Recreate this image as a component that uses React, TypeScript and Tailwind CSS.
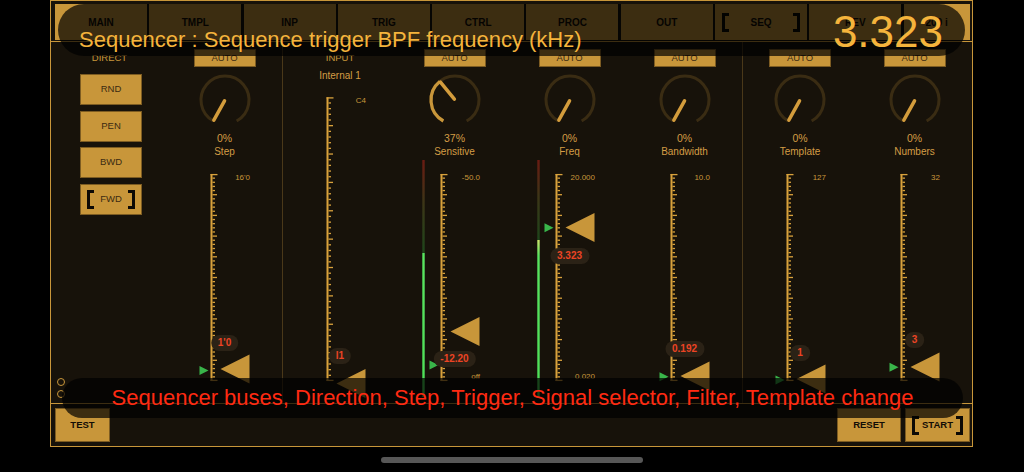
import React from "react";

type Meter = { from: number; warm?: boolean };

type SliderProps = {
  hClass: string;
  top: number;
  bottom: number;
  topLabel: string;
  bottomLabel?: string;
  thumbY: number;
  arrowY?: number;
  pill: string;
  pillY: number;
  meter?: Meter;
};

const X = 44.5;
const TICK = "#d9a23c";

function Slider({ hClass, top, bottom, topLabel, bottomLabel, thumbY, arrowY, pill, pillY, meter }: SliderProps) {
  const ticks = [];
  for (let i = 1; i < 50; i++) {
    const y = top + (i * (bottom - top)) / 50;
    ticks.push(
      <line key={i} x1={X + 1} x2={i % 5 === 0 ? X + 5.5 : X + 3.5} y1={y} y2={y} stroke={TICK} strokeWidth={1.3} />
    );
  }
  const id = `m${pill.replace(/[^0-9]/g, "")}`;
  return (
    <div className={`relative w-full ${hClass}`}>
      <svg className="absolute left-0 top-0 overflow-visible" width={114} height={330}>
        {meter && (
          <>
            <defs>
              <linearGradient id={`${id}d`} x1="0" y1="0" x2="0" y2="1">
                <stop offset="0" stopColor="#6b1b12" />
                <stop offset="0.45" stopColor="#3d3517" />
                <stop offset="1" stopColor="#1e461b" />
              </linearGradient>
              <linearGradient id={`${id}g`} x1="0" y1="0" x2="0" y2="1">
                <stop offset="0" stopColor={meter.warm ? "#cde46c" : "#58e45f"} />
                <stop offset="0.1" stopColor="#58e45f" />
                <stop offset="1" stopColor="#4ddf58" />
              </linearGradient>
            </defs>
            <rect x={25.3} y={0} width={2.4} height={meter.from} fill={`url(#${id}d)`} />
            <rect x={25.3} y={meter.from} width={2.4} height={237 - meter.from} fill={`url(#${id}g)`} />
          </>
        )}
        <rect x={X - 1} y={top} width={2} height={bottom - top} fill={TICK} />
        <line x1={X - 1} x2={X + 6} y1={top + 0.6} y2={top + 0.6} stroke={TICK} strokeWidth={1.3} />
        <line x1={X - 1} x2={X + 6} y1={bottom - 0.6} y2={bottom - 0.6} stroke={TICK} strokeWidth={1.3} />
        {ticks}
        <polygon points={`${X + 9},${thumbY} ${X + 38},${thumbY - 14.5} ${X + 38},${thumbY + 14.5}`} fill="#c8963a" />
        {arrowY !== undefined && (
          <polygon points={`${X - 12},${arrowY - 4.5} ${X - 3},${arrowY} ${X - 12},${arrowY + 4.5}`} fill="#39b54a" />
        )}
      </svg>
      <div className="absolute left-[44px] w-[39px] text-right text-[8px] leading-[10px] text-[#c8963a]" style={{ top: top - 1 }}>
        {topLabel}
      </div>
      {bottomLabel && (
        <div className="absolute left-[44px] w-[39px] text-right text-[8px] leading-[10px] text-[#c8963a]" style={{ top: bottom - 9 }}>
          {bottomLabel}
        </div>
      )}
      <div
        className="absolute left-1/2 -translate-x-1/2 h-[16px] px-[7px] rounded-full bg-[#2b2216] flex items-center text-[10px] font-bold leading-none text-[#ec4424] whitespace-nowrap"
        style={{ top: pillY - 8 }}
      >
        {pill}
      </div>
    </div>
  );
}

function Knob({ value }: { value: number }) {
  const c = 28;
  const r = 24;
  const p = (a: number, rad: number) =>
    `${(c + rad * Math.sin((a * Math.PI) / 180)).toFixed(2)} ${(c - rad * Math.cos((a * Math.PI) / 180)).toFixed(2)}`;
  const a0 = -151;
  const a1 = 151;
  const av = a0 + value * (a1 - a0);
  const arc = (s: number, e: number) => `M ${p(s, r)} A ${r} ${r} 0 ${e - s > 180 ? 1 : 0} 1 ${p(e, r)}`;
  const [ex, ey] = p(av, 23).split(" ");
  const [sx, sy] = p(av, 1).split(" ");
  return (
    <svg width={56} height={56} className="mt-[5px] shrink-0">
      <path d={arc(a0, a1)} fill="none" stroke="#3a2c13" strokeWidth={3} />
      {value > 0 && <path d={arc(a0, av)} fill="none" stroke="#c8963a" strokeWidth={3.2} />}
      <line x1={sx} y1={sy} x2={ex} y2={ey} stroke="#d39c3c" strokeWidth={3.5} strokeLinecap="round" />
    </svg>
  );
}

function Bracket({ side }: { side: "l" | "r" }) {
  return (
    <span
      className={
        side === "l"
          ? "block w-[7px] h-[19px] border-[3px] border-r-0 border-[#0d0a05]"
          : "block w-[7px] h-[19px] border-[3px] border-l-0 border-[#0d0a05]"
      }
    />
  );
}

const tabs = ["MAIN", "TMPL", "INP", "TRIG", "CTRL", "PROC", "OUT", "SEQ", "REV", "200 i"];

type Col = {
  name: string;
  pct: string;
  knob: number;
  topLabel: string;
  bottomLabel?: string;
  pill: string;
  pillY: number;
  thumbY: number;
  arrowY?: number;
  meter?: Meter;
  divider?: boolean;
};

const cols: Col[] = [
  { name: "Sensitive", pct: "37%", knob: 0.37, topLabel: "-50.0", bottomLabel: "off", pill: "-12.20", pillY: 198.7, thumbY: 171.5, arrowY: 205, meter: { from: 93 } },
  { name: "Freq", pct: "0%", knob: 0, topLabel: "20.000", bottomLabel: "0.020", pill: "3.323", pillY: 95.7, thumbY: 67.5, arrowY: 67.7, meter: { from: 80, warm: true } },
  { name: "Bandwidth", pct: "0%", knob: 0, topLabel: "10.0", pill: "0.192", pillY: 189.3, thumbY: 216, arrowY: 216.7 },
  { name: "Template", pct: "0%", knob: 0, topLabel: "127", pill: "1", pillY: 192.5, thumbY: 219, arrowY: 220, divider: true },
  { name: "Numbers", pct: "0%", knob: 0, topLabel: "32", pill: "3", pillY: 180, thumbY: 207, arrowY: 207.2 },
];

function KnobCol({ c }: { c: Col }) {
  return (
    <div className={c.divider ? "flex flex-col items-center border-l border-[#4a3819]" : "flex flex-col items-center"}>
      <div className="mt-[7px] w-[62px] h-[18px] bg-[#c8963a] border border-[#7d5c22] flex items-center justify-center text-[9.5px] text-[#3b2a12]">
        AUTO
      </div>
      <Knob value={c.knob} />
      <div className="mt-[3px] h-[14px] leading-[14px] text-[10.5px] text-[#d49d45]">{c.pct}</div>
      <div className="h-[15px] leading-[14px] text-[10px] text-[#d49d45]">{c.name}</div>
      <Slider
        hClass="h-[243px]"
        top={14}
        bottom={221}
        topLabel={c.topLabel}
        bottomLabel={c.bottomLabel}
        thumbY={c.thumbY}
        arrowY={c.arrowY}
        pill={c.pill}
        pillY={c.pillY}
        meter={c.meter}
      />
    </div>
  );
}

const gold = "bg-[#c8963a] border border-[#7d5c22]";

export default function App() {
  return (
    <div className="relative w-[1024px] h-[472px] overflow-hidden bg-black font-['Liberation_Sans',Arial,sans-serif]">
      <div className="ml-[50px] w-[923px] h-[447px] flex flex-col border border-[#c8963a] bg-[#17120a]">
        <div className="flex gap-[2.3px] pl-[4px] pt-[3px] pb-[1px] border-b border-[#c8963a]">
          {tabs.map((t, i) => (
            <div
              key={t}
              className={`h-[36px] ${i === tabs.length - 1 ? "w-[66px]" : "w-[92px]"} bg-[#c8963a] flex items-center ${
                t === "SEQ" ? "justify-between px-[7px]" : "justify-center"
              } text-[10px] font-bold text-[#120d06]`}
            >
              {t === "SEQ" && <Bracket side="l" />}
              <span>{t}</span>
              {t === "SEQ" && <Bracket side="r" />}
            </div>
          ))}
        </div>

        <div className="flex-1 grid grid-cols-[repeat(8,115px)] pl-[1px] border-b border-[#c8963a]">
          <div className="flex flex-col items-center">
            <div className="mt-[9px] h-[14px] leading-[14px] text-[9.5px] text-[#c8963a]">DIRECT</div>
            <div className="mt-[9px] ml-[3px] flex flex-col gap-[5.5px]">
              {["RND", "PEN", "BWD"].map((b) => (
                <div key={b} className={`w-[62px] h-[31px] ${gold} flex items-center justify-center text-[9.5px] text-[#3b2a12]`}>
                  {b}
                </div>
              ))}
              <div className={`w-[62px] h-[31px] ${gold} flex items-center justify-between px-[6px] text-[9.5px] text-[#3b2a12]`}>
                <Bracket side="l" />
                <span>FWD</span>
                <Bracket side="r" />
              </div>
            </div>
          </div>

          <KnobCol
            c={{ name: "Step", pct: "0%", knob: 0, topLabel: "16'0", pill: "1'0", pillY: 182.8, thumbY: 209, arrowY: 210.5 }}
          />

          <div className="flex flex-col items-center border-l border-[#4a3819]">
            <div className="mt-[9px] h-[14px] leading-[14px] text-[9.5px] text-[#c8963a]">INPUT</div>
            <div className="mt-[4px] h-[14px] leading-[14px] text-[10px] text-[#d49d45]">Internal 1</div>
            <Slider hClass="h-[320px]" top={14.3} bottom={298} topLabel="C4" thumbY={300.4} pill="I1" pillY={273} />
          </div>

          {cols.map((c) => (
            <KnobCol key={c.name} c={c} />
          ))}
        </div>

        <div className="h-[42px] flex justify-between items-start pt-[4px] pl-[4px] pr-[2px]">
          <div className={`w-[55px] h-[34px] ${gold} flex items-center justify-center text-[9.5px] font-bold text-[#120d06]`}>TEST</div>
          <div className="flex gap-[4px]">
            <div className={`w-[64px] h-[34px] ${gold} flex items-center justify-center text-[9.5px] font-bold text-[#120d06]`}>RESET</div>
            <div className={`w-[65px] h-[34px] ${gold} flex items-center justify-between px-[6px] text-[9.5px] font-bold text-[#120d06]`}>
              <Bracket side="l" />
              <span>START</span>
              <Bracket side="r" />
            </div>
          </div>
        </div>
      </div>

      <div className="ml-[381px] mt-[10px] w-[262px] h-[6px] rounded-full bg-[#575757]" />

      <div className="absolute left-[57px] top-[378px] w-[8px] h-[8px] rounded-full border-[1.5px] border-[#c8963a]" />
      <div className="absolute left-[57px] top-[390px] w-[8px] h-[8px] rounded-full border-[1.5px] border-[#c8963a]" />

      <div className="absolute left-[58px] top-[4px] w-[907px] h-[52px] rounded-full bg-black/70 flex items-baseline justify-between pl-[21px] pr-[22px] pt-[5.5px]">
        <span className="text-[22px] leading-[24px] text-[#f5b43c] whitespace-nowrap">Sequencer : Sequence trigger BPF frequency (kHz)</span>
        <span className="text-[44px] leading-[44px] text-[#f5b43c]">3.323</span>
      </div>

      <div className="absolute left-[62px] top-[378px] w-[901px] h-[40px] rounded-[20px] bg-black/70 flex items-center justify-center">
        <span className="text-[22px] leading-none text-[#ff2a12] whitespace-nowrap">
          Sequencer buses, Direction, Step, Trigger, Signal selector, Filter, Template change
        </span>
      </div>
    </div>
  );
}
